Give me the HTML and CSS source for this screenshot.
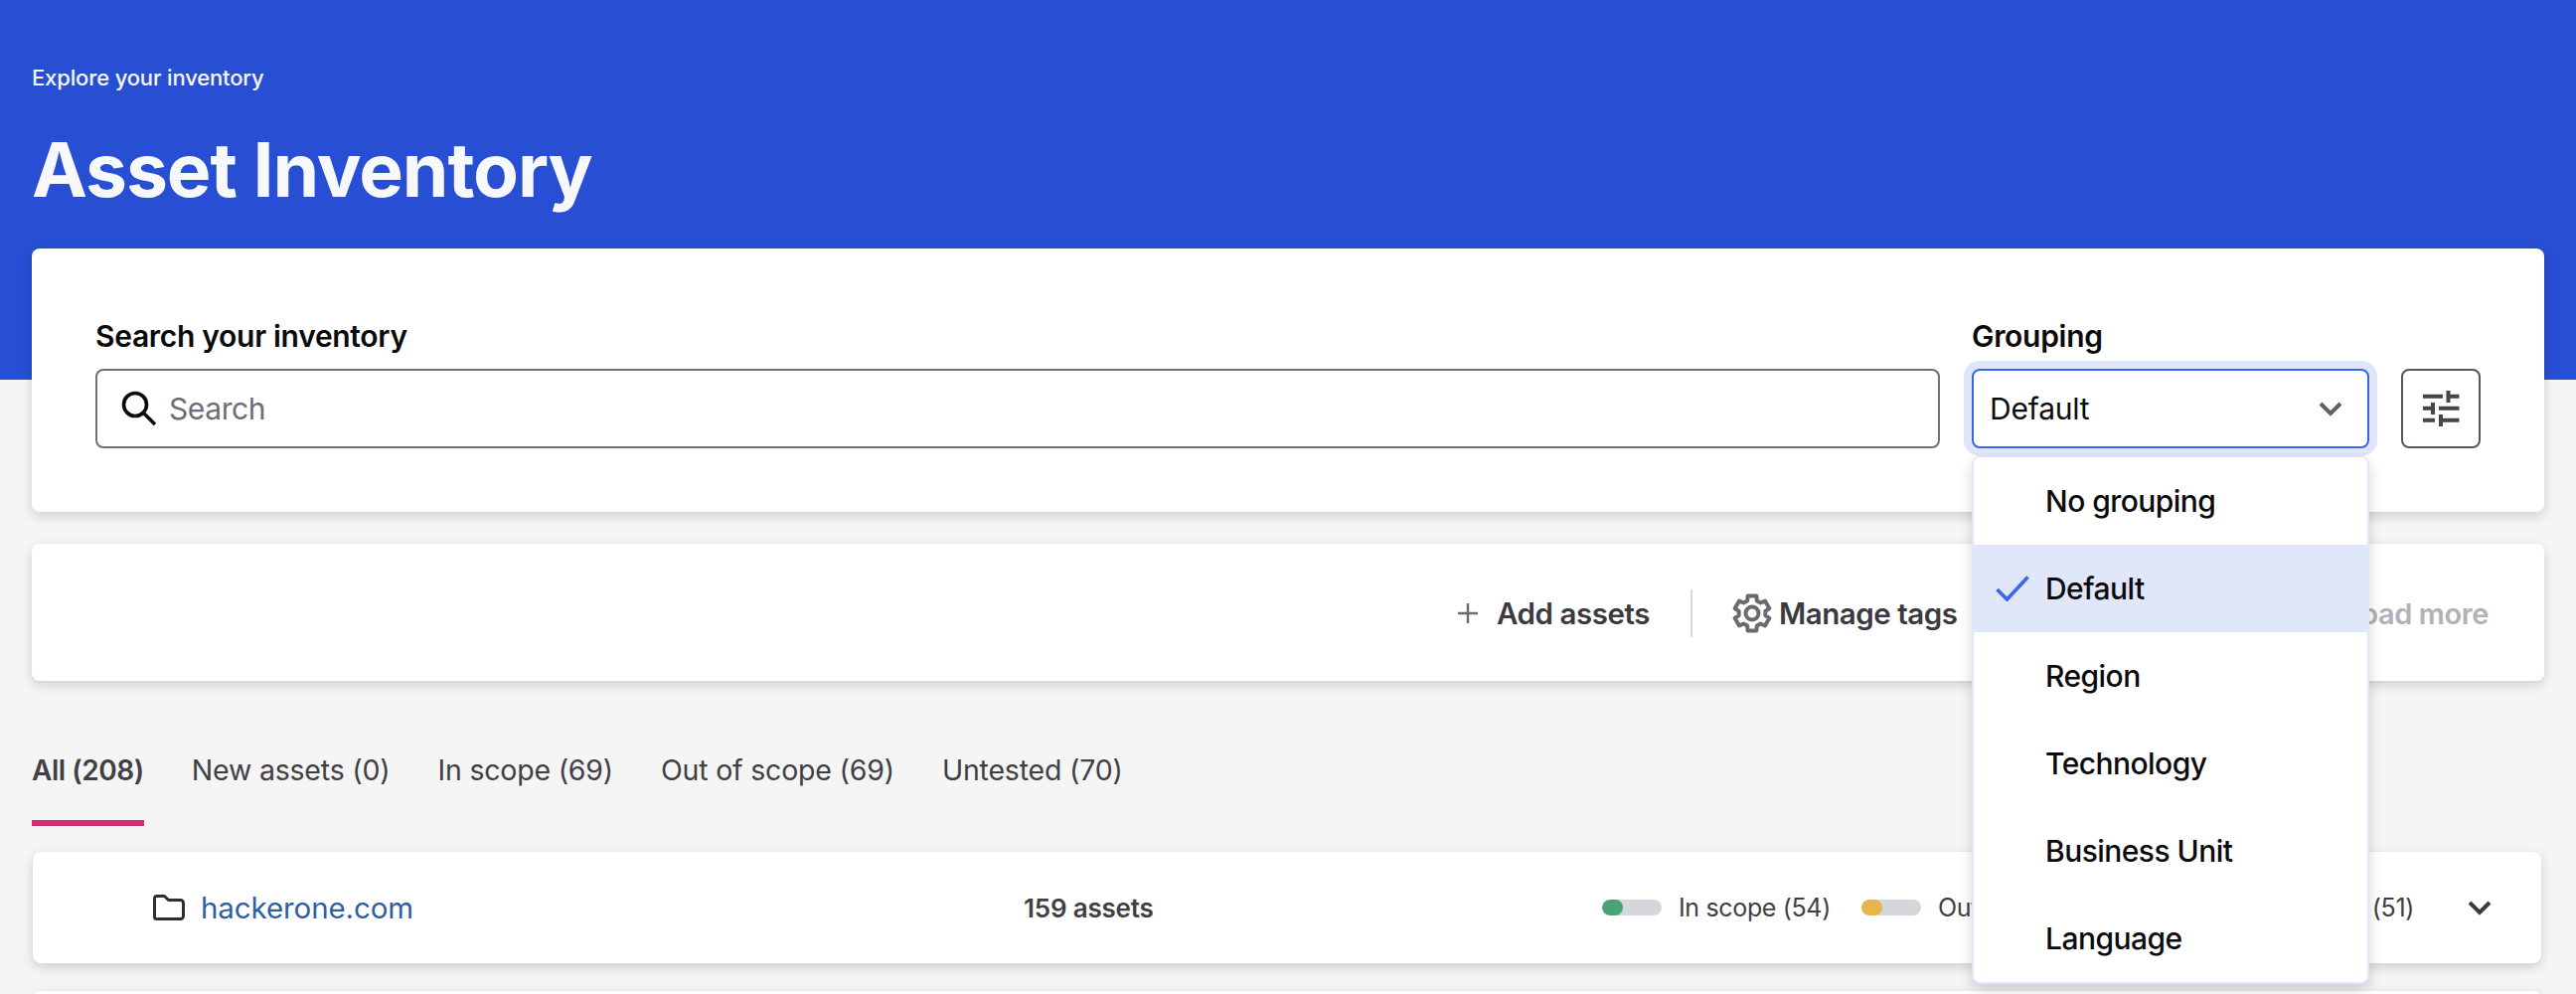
FILE: index.html
```html
<!DOCTYPE html>
<html lang="en">

<head>
    <meta charset="UTF-8">
    <meta name="viewport" content="width=device-width, initial-scale=1.0">
    <title>Asset Inventory</title>
    <link rel="stylesheet" href="styles.css">
</head>

<body>
    <header class="hero">
        <p class="hero-sub">Explore your inventory</p>
        <h1 class="hero-title">Asset Inventory</h1>
    </header>

    <main class="page">
        <section class="card search-card">
            <div class="search-field">
                <label class="field-label">Search your inventory</label>
                <div class="search-input">
                    <svg class="search-icon" viewBox="0 0 36 36" fill="none" stroke="#0b0b0d" stroke-width="3.6">
                        <circle cx="14" cy="14" r="11.5"></circle>
                        <path d="M22.5 22.5L34 34"></path>
                    </svg>
                    <span class="search-placeholder">Search</span>
                </div>
            </div>
            <div class="grouping">
                <label class="field-label">Grouping</label>
                <div class="select">
                    <span>Default</span>
                    <svg class="select-chevron" viewBox="0 0 24 16" fill="none" stroke="#5f6066" stroke-width="4">
                        <path d="M2 3l10 10L22 3"></path>
                    </svg>
                </div>
                <ul class="menu">
                    <li class="menu-item">No grouping</li>
                    <li class="menu-item selected">
                        <svg class="menu-check" viewBox="0 0 34 26" fill="none" stroke="#3a66e8" stroke-width="3.6">
                            <path d="M1.5 14L11.5 24L32.5 1.5"></path>
                        </svg>
                        Default
                    </li>
                    <li class="menu-item">Region</li>
                    <li class="menu-item">Technology</li>
                    <li class="menu-item">Business Unit</li>
                    <li class="menu-item">Language</li>
                </ul>
            </div>
            <button class="filter-btn">
                <svg viewBox="0 0 37 36" fill="none" stroke="#43454c" stroke-width="4">
                    <path d="M0 5.7h20M25.5 0v12M25.5 5.7h11M0 17.7h10M10 12v12M16 17.7h20.5M0 29.7h12M18 24v12M18 29.7h18.5"></path>
                </svg>
            </button>
        </section>

        <section class="card toolbar">
            <a class="tool-link">
                <svg class="plus-icon" viewBox="0 0 20 20" stroke="#6b6b6f" stroke-width="2.4">
                    <path d="M10 0v20M0 10h20"></path>
                </svg>
                Add assets
            </a>
            <span class="tool-divider"></span>
            <a class="tool-link tags-link">
                <svg class="gear-icon" viewBox="0 0 40 40" fill="none" stroke="#6b6b6f" stroke-width="4" stroke-linejoin="round">
                    <circle cx="20" cy="20" r="6.5"></circle>
                    <path d="M15.16 7.4L15.65 2.53H24.35L24.84 7.4L28.5 9.51L32.95 7.5L37.3 15.04L33.33 17.89V22.11L37.3 24.96L32.95 32.5L28.5 30.49L24.84 32.6L24.35 37.47H15.65L15.16 32.6L11.5 30.49L7.05 32.5L2.7 24.96L6.67 22.11V17.89L2.7 15.04L7.05 7.5L11.5 9.51Z"></path>
                </svg>
                Manage tags
            </a>
            <span class="load-more">Load more</span>
        </section>

        <nav class="tabs">
            <a class="tab active">All (208)</a>
            <a class="tab">New assets (0)</a>
            <a class="tab">In scope (69)</a>
            <a class="tab">Out of scope (69)</a>
            <a class="tab">Untested (70)</a>
        </nav>

        <section class="card row">
            <svg class="folder-icon" viewBox="0 0 32 26" fill="none" stroke="#2c2f38" stroke-width="3" stroke-linejoin="round">
                <path d="M1.5 3.5a2 2 0 0 1 2-2h8l4 4h12a3 3 0 0 1 3 3v13a3 3 0 0 1-3 3h-24a2 2 0 0 1-2-2z"></path>
            </svg>
            <a class="row-name">hackerone.com</a>
            <span class="row-count">159 assets</span>
            <div class="row-stats">
                <span class="stat"><span class="bar"><span class="bar-fill green"></span></span>In scope (54)</span>
                <span class="stat"><span class="bar"><span class="bar-fill yellow"></span></span>Out of scope (54)</span>
                <span class="stat"><span class="bar"><span class="bar-fill gray"></span></span>Untested (51)</span>
            </div>
            <svg class="row-chevron" viewBox="0 0 24 16" fill="none" stroke="#3a3a3f" stroke-width="4">
                <path d="M2 3l10 10L22 3"></path>
            </svg>
        </section>

        <section class="card row"></section>
    </main>
</body>

</html>
```

FILE: styles.css
```css
* {
    box-sizing: border-box;
}

html,
body {
    height: 1000px;
}

body {
    margin: 0;
    overflow: hidden;
    background-color: #f5f5f5;
    color: #0b0b0d;
    font-family: 'Inter', 'Noto Sans', sans-serif;
}

.hero {
    height: 382px;
    padding: 65px 32px 0;
    background-color: #284fd3;
    color: #f7f8fb;
}

.hero-sub {
    margin: 0;
    font-size: 22px;
    line-height: 26px;
    font-weight: 500;
    letter-spacing: -0.15px;
}

.hero-title {
    margin: 34px 0 0;
    font-size: 75px;
    line-height: 92px;
    font-weight: 700;
    letter-spacing: -1.1px;
}

.page {
    margin-top: -132px;
    padding: 0 32px;
}

.card {
    background-color: #fff;
    border-radius: 8px;
    box-shadow: 0 4px 12px rgba(0, 0, 0, 0.16);
}

.search-card {
    display: flex;
    align-items: flex-end;
    gap: 32px;
    height: 265px;
    padding: 0 64px 64px;
}

.search-field {
    flex: 1;
}

.field-label {
    display: block;
    margin-bottom: 14px;
    font-size: 30px;
    line-height: 37px;
    font-weight: 600;
    letter-spacing: -0.3px;
}

.search-input {
    display: flex;
    align-items: center;
    gap: 12px;
    height: 80px;
    padding-left: 24px;
    border: 2px solid #6f717a;
    border-radius: 8px;
    background-color: #fff;
}

.search-icon {
    width: 36px;
    height: 36px;
}

.search-placeholder {
    color: #6b6e76;
    font-size: 30px;
    letter-spacing: -0.4px;
}

.grouping {
    position: relative;
    width: 400px;
}

.select {
    display: flex;
    align-items: center;
    justify-content: space-between;
    height: 80px;
    padding: 0 25px 0 16px;
    border: 2px solid #3a66e8;
    border-radius: 8px;
    background-color: #fff;
    box-shadow: 0 0 0 8px #dfe5fa;
    font-size: 30px;
    letter-spacing: -0.2px;
}

.select-chevron {
    width: 24px;
    height: 16px;
}

.menu {
    position: absolute;
    top: 139px;
    left: 0;
    z-index: 10;
    width: 400px;
    margin: 0;
    padding: 0;
    list-style: none;
    overflow: hidden;
    border: 2px solid #e1e7fa;
    border-top-width: 1px;
    border-radius: 8px;
    background-color: #fff;
    box-shadow: 0 6px 14px rgba(0, 0, 0, 0.16);
}

.menu-item {
    position: relative;
    height: 88px;
    padding-left: 72px;
    font-size: 30px;
    line-height: 88px;
    font-weight: 500;
    letter-spacing: -0.55px;
}

.menu-item.selected {
    background-color: #e1e7fa;
}

.menu-check {
    position: absolute;
    top: 31px;
    left: 22px;
    width: 34px;
    height: 26px;
}

.filter-btn {
    display: flex;
    align-items: center;
    justify-content: center;
    width: 80px;
    height: 80px;
    padding: 0;
    border: 2px solid #55575f;
    border-radius: 8px;
    background-color: #fff;
}

.filter-btn svg {
    width: 37px;
    height: 36px;
}

.toolbar {
    display: flex;
    align-items: center;
    height: 138px;
    margin-top: 32px;
    padding: 2px 56px 0 1435px;
}

.tool-link {
    display: flex;
    align-items: center;
    color: #3a3a3f;
    font-size: 29.5px;
    font-weight: 600;
    letter-spacing: -0.45px;
}

.plus-icon {
    width: 20px;
    height: 20px;
    margin-right: 19px;
}

.tool-divider {
    width: 2px;
    height: 48px;
    margin: 0 40px 0 41px;
    background-color: #d9d9dc;
}

.gear-icon {
    width: 40px;
    height: 40px;
    margin-right: 7px;
}

.load-more {
    margin-left: auto;
    color: #b0b1b9;
    font-size: 29px;
    font-weight: 600;
    letter-spacing: -0.4px;
}

.tabs {
    display: flex;
    gap: 48px;
    height: 146px;
    padding-top: 66px;
}

.tab {
    height: 80px;
    padding-top: 2px;
    color: #3f3f44;
    font-size: 28.5px;
    line-height: 44px;
    letter-spacing: -0.2px;
    white-space: nowrap;
}

.tab.active {
    border-bottom: 6px solid #d02f74;
    font-size: 28px;
    font-weight: 600;
    letter-spacing: -0.45px;
}

.row {
    display: flex;
    align-items: center;
    height: 112px;
    margin: 26px 3px 28px 1px;
    padding-left: 121px;
}

.folder-icon {
    width: 32px;
    height: 26px;
    margin-right: 16px;
}

.row-name {
    width: 828px;
    color: #2f5f9f;
    font-size: 29.5px;
    letter-spacing: -0.1px;
}

.row-count {
    width: 582px;
    color: #3f3f44;
    font-size: 26px;
    font-weight: 600;
    letter-spacing: -0.2px;
}

.row-stats {
    display: flex;
    gap: 31px;
    width: 817px;
    margin-right: 54px;
}

.stat {
    display: flex;
    align-items: center;
    color: #3f3f44;
    font-size: 25px;
    letter-spacing: -0.35px;
    white-space: nowrap;
}

.stat:last-child {
    margin-left: auto;
}

.bar {
    width: 60px;
    height: 16px;
    margin-right: 17px;
    border-radius: 8px;
    background-color: #d5d6dc;
    overflow: hidden;
}

.bar-fill {
    display: block;
    width: 21px;
    height: 16px;
    border-radius: 8px;
}

.green {
    background-color: #4aa373;
}

.yellow {
    background-color: #e9b44c;
}

.gray {
    background-color: #8a8c94;
}

.row-chevron {
    width: 24px;
    height: 16px;
}
```
